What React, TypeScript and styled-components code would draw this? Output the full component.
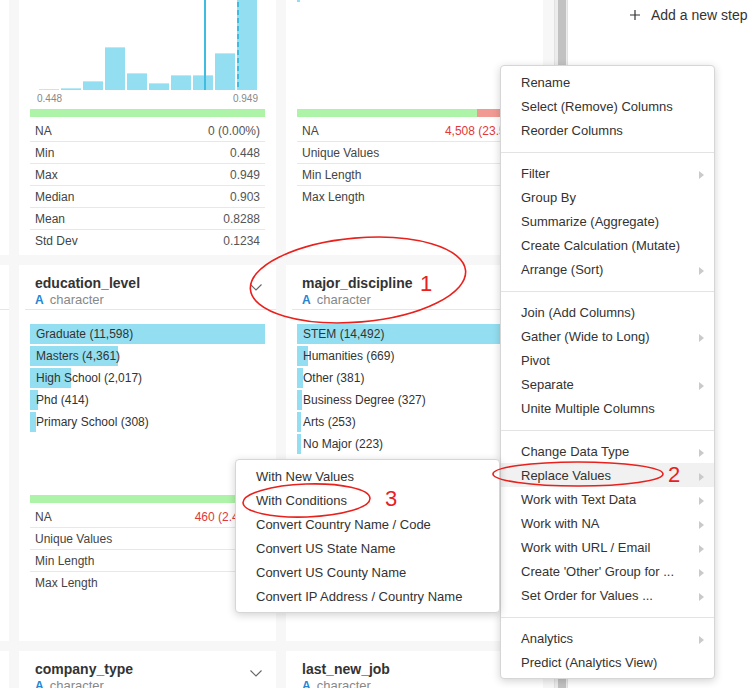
import React from 'react';
import styled, { createGlobalStyle } from 'styled-components';

const GlobalStyle = createGlobalStyle`
  html, body { margin: 0; padding: 0; }
  body {
    font-family: "Liberation Sans", Arial, Helvetica, sans-serif;
    color: #333;
    background: #f7f7f7;
  }
`;

const CYAN = '#93dff1';
const LINE = '#3ebde0';

const Page = styled.div`
  position: relative;
  width: 751px;
  height: 688px;
  overflow: hidden;
  display: flex;
  background: #f7f7f7;
`;

const Main = styled.div`
  width: 554px;
  flex: none;
  overflow: hidden;
  background: #f7f7f7;
`;

const Grid = styled.div`
  display: grid;
  grid-template-columns: repeat(3, 257px);
  grid-auto-rows: 376px;
  gap: 10px;
  margin-left: -248px;
  margin-top: -121px;
`;

const Splitter = styled.div`
  width: 14px;
  flex: none;
  box-sizing: border-box;
  background: #ececec;
  border-left: 1px solid #e2e2e2;
  border-right: 1px solid #e2e2e2;
  padding-left: 3px;
  display: flex;
`;

const SplitThumb = styled.div`
  width: 8px;
  background: #c2c2c2;
`;

const Side = styled.div`
  flex: 1;
  background: #fff;
  padding-top: 6px;
`;

const AddStep = styled.div`
  display: flex;
  align-items: center;
  gap: 11px;
  padding-left: 62px;
  font-size: 14px;
  line-height: 18px;
  color: #333;
`;

const Card = styled.div`
  background: #fff;
  display: flex;
  flex-direction: column;
  overflow: hidden;
`;

const Header = styled.div`
  height: 44px;
  box-sizing: border-box;
  padding: 10px 14px 0 16px;
  display: flex;
  justify-content: space-between;
  align-items: flex-start;
`;

const Title = styled.div`
  font-size: 14px;
  font-weight: bold;
  line-height: 17px;
  color: #333;
  white-space: nowrap;
`;

const TypeLine = styled.div`
  font-size: 13px;
  line-height: 16px;
  color: #888;
  display: flex;
  align-items: center;
  white-space: nowrap;
`;

const TypeIcon = styled.span`
  font-size: 12px;
  font-weight: bold;
  color: #2385d3;
  margin-right: 6px;
`;

const ChevronBox = styled.svg`
  margin-top: 9px;
  flex: none;
`;

const Divider = styled.div`
  height: 1px;
  margin-left: 6px;
  background: #e6e6e6;
`;

const Chart = styled.div`
  height: 185px;
  box-sizing: border-box;
  padding: 14px 11px 0;
`;

const BarRow = styled.div<{ $pct: number }>`
  height: 20px;
  margin-bottom: 2px;
  padding-left: 6px;
  font-size: 12px;
  line-height: 20px;
  color: #333;
  white-space: nowrap;
  background: linear-gradient(to right, ${CYAN} ${(p) => p.$pct}%, transparent ${(p) => p.$pct}%);
`;

const HistBars = styled.div`
  position: relative;
  height: 152px;
  margin: 0 8px 0 9px;
  display: flex;
  align-items: flex-end;
  gap: 2px;
`;

const HistBar = styled.div<{ $h: number }>`
  width: 20px;
  flex: none;
  height: ${(p) => p.$h}px;
  box-sizing: border-box;
  background: ${CYAN};
  border-top: 1px solid #b6ebf7;
`;

const MarkLine = styled.div<{ $x: number; $dashed?: boolean }>`
  position: absolute;
  top: 0;
  bottom: 0;
  left: ${(p) => p.$x}px;
  width: 2px;
  background: ${(p) =>
    p.$dashed
      ? `repeating-linear-gradient(to bottom, ${LINE} 0 5px, transparent 5px 8px)`
      : LINE};
`;

const HistLabels = styled.div`
  display: flex;
  justify-content: space-between;
  padding: 0 7px;
  font-size: 10px;
  line-height: 18px;
  color: #888;
`;

const Quality = styled.div<{ $good: number }>`
  height: 8px;
  margin: 0 11px;
  background: linear-gradient(to right, #aef4a8 ${(p) => p.$good}%, #f19a93 ${(p) => p.$good}%);
`;

const Stats = styled.div`
  margin: 3px 11px 0;
`;

const StatRow = styled.div`
  display: flex;
  justify-content: space-between;
  height: 19px;
  padding: 2px 5px 0;
  line-height: 19px;
  font-size: 12px;
  color: #444;
  white-space: nowrap;
  & + & {
    border-top: 1px solid #e8e8e8;
  }
`;

const StatValue = styled.span<{ $red?: boolean }>`
  color: ${(p) => (p.$red ? '#e0393a' : '#555')};
`;

const Menu = styled.div<{ $left: number; $top: number; $width: number }>`
  position: absolute;
  left: ${(p) => p.$left}px;
  top: ${(p) => p.$top}px;
  width: ${(p) => p.$width}px;
  box-sizing: border-box;
  padding: 4px 0;
  background: #fff;
  border: 1px solid #d6d6d6;
  border-radius: 4px;
  box-shadow: 0 2px 8px rgba(0, 0, 0, 0.18);
  font-size: 13px;
  color: #333;
`;

const MenuItem = styled.div<{ $active?: boolean }>`
  height: 24px;
  box-sizing: border-box;
  padding: 2px 10px 0 20px;
  line-height: 22px;
  display: flex;
  justify-content: space-between;
  align-items: center;
  white-space: nowrap;
  background: ${(p) => (p.$active ? '#f1f1f1' : 'transparent')};
`;

const Caret = styled.span`
  width: 0;
  height: 0;
  border-left: 5px solid #cacaca;
  border-top: 4px solid transparent;
  border-bottom: 4px solid transparent;
  margin-top: 1px;
`;

const MenuSep = styled.div`
  height: 1px;
  background: #e3e3e3;
  margin: 10px 0 8px;
`;

const Overlay = styled.svg`
  position: absolute;
  left: 0;
  top: 0;
  pointer-events: none;
`;

type Column = {
  name: string;
  kind: 'num' | 'cat';
  bars?: [string, number][];
  hist?: number[];
  labels?: [string, string];
  good: number;
  stats: [string, string, boolean?][];
};

const Chevron = () => (
  <ChevronBox width="12" height="7" viewBox="0 0 12 7">
    <polyline points="0.5,0.5 6,6 11.5,0.5" fill="none" stroke="#666" strokeWidth="1.1" />
  </ChevronBox>
);

const ColumnCard = ({ col }: { col: Column }) => {
  const max = col.bars ? Math.max(...col.bars.map((b) => b[1])) : 1;
  return (
    <Card>
      <Header>
        <div>
          <Title>{col.name}</Title>
          <TypeLine>
            <TypeIcon>{col.kind === 'cat' ? 'A' : '#'}</TypeIcon>
            {col.kind === 'cat' ? 'character' : 'numeric'}
          </TypeLine>
        </div>
        <Chevron />
      </Header>
      <Divider />
      <Chart>
        {col.kind === 'cat' &&
          col.bars!.map(([label, n]) => (
            <BarRow key={label} $pct={Math.max((n / max) * 100, 0.9)}>
              {label} ({n.toLocaleString('en-US')})
            </BarRow>
          ))}
        {col.kind === 'num' && (
          <>
            <HistBars>
              {col.hist!.map((h, i) => (
                <HistBar key={i} $h={h} />
              ))}
              <MarkLine $x={165} />
              <MarkLine $x={198} $dashed />
            </HistBars>
            <HistLabels>
              <span>{col.labels![0]}</span>
              <span>{col.labels![1]}</span>
            </HistLabels>
          </>
        )}
      </Chart>
      <Quality $good={col.good} />
      <Stats>
        {col.stats.map(([k, v, red]) => (
          <StatRow key={k}>
            <span>{k}</span>
            <StatValue $red={red}>{v}</StatValue>
          </StatRow>
        ))}
      </Stats>
    </Card>
  );
};

const charStats = (na: string, red: boolean, u: string, mn: string, mx: string): [string, string, boolean?][] => [
  ['NA', na, red],
  ['Unique Values', u],
  ['Min Length', mn],
  ['Max Length', mx],
];

const columns: Column[] = [
  {
    name: 'city',
    kind: 'cat',
    bars: [['city_103', 4355], ['city_21', 2702], ['city_16', 1533], ['city_114', 1336], ['city_160', 845], ['Other', 8387]],
    good: 100,
    stats: charStats('0 (0.00%)', false, '123', '6', '8'),
  },
  {
    name: 'city_development_index',
    kind: 'num',
    hist: [1, 2, 9, 43, 17, 7.5, 15, 15.5, 37, 152],
    labels: ['0.448', '0.949'],
    good: 100,
    stats: [
      ['NA', '0 (0.00%)'],
      ['Min', '0.448'],
      ['Max', '0.949'],
      ['Median', '0.903'],
      ['Mean', '0.8288'],
      ['Std Dev', '0.1234'],
    ],
  },
  {
    name: 'gender',
    kind: 'cat',
    bars: [['Male', 13221], ['Female', 1238], ['Other', 191]],
    good: 76.5,
    stats: charStats('4,508 (23.53%)', true, '3', '4', '6'),
  },
  {
    name: 'enrolled_university',
    kind: 'cat',
    bars: [['no_enrollment', 13817], ['Full time course', 3757], ['Part time course', 1198]],
    good: 98,
    stats: charStats('386 (2.01%)', true, '3', '16', '16'),
  },
  {
    name: 'education_level',
    kind: 'cat',
    bars: [['Graduate', 11598], ['Masters', 4361], ['High School', 2017], ['Phd', 414], ['Primary School', 308]],
    good: 97.6,
    stats: charStats('460 (2.40%)', true, '5', '3', '14'),
  },
  {
    name: 'major_discipline',
    kind: 'cat',
    bars: [['STEM', 14492], ['Humanities', 669], ['Other', 381], ['Business Degree', 327], ['Arts', 253], ['No Major', 223]],
    good: 85.3,
    stats: charStats('2,813 (14.68%)', true, '6', '4', '15'),
  },
  {
    name: 'company_size',
    kind: 'cat',
    bars: [['50-99', 3083], ['100-500', 2571], ['10000+', 2019]],
    good: 69,
    stats: charStats('5,938 (30.99%)', true, '8', '3', '9'),
  },
  {
    name: 'company_type',
    kind: 'cat',
    bars: [['Pvt Ltd', 9817], ['Funded Startup', 1001], ['Public Sector', 955]],
    good: 68,
    stats: charStats('6,140 (32.05%)', true, '6', '3', '19'),
  },
  {
    name: 'last_new_job',
    kind: 'cat',
    bars: [['1', 8040], ['>4', 3290], ['2', 2900], ['never', 2452]],
    good: 97.8,
    stats: charStats('423 (2.21%)', true, '6', '1', '5'),
  },
];

const mainMenu: (string | null | [string, boolean])[] = [
  'Rename',
  'Select (Remove) Columns',
  'Reorder Columns',
  null,
  ['Filter', true],
  'Group By',
  'Summarize (Aggregate)',
  'Create Calculation (Mutate)',
  ['Arrange (Sort)', true],
  null,
  'Join (Add Columns)',
  ['Gather (Wide to Long)', true],
  'Pivot',
  ['Separate', true],
  'Unite Multiple Columns',
  null,
  ['Change Data Type', true],
  ['Replace Values', true],
  ['Work with Text Data', true],
  ['Work with NA', true],
  ['Work with URL / Email', true],
  ["Create 'Other' Group for ...", true],
  ['Set Order for Values ...', true],
  null,
  ['Analytics', true],
  'Predict (Analytics View)',
];

const subMenu = [
  'With New Values',
  'With Conditions',
  'Convert Country Name / Code',
  'Convert US State Name',
  'Convert US County Name',
  'Convert IP Address / Country Name',
];

export default function App() {
  return (
    <>
      <GlobalStyle />
      <Page>
        <Main>
          <Grid>
            {columns.map((c) => (
              <ColumnCard key={c.name} col={c} />
            ))}
          </Grid>
        </Main>
        <Splitter>
          <SplitThumb />
        </Splitter>
        <Side>
          <AddStep>
            <svg width="10" height="10" viewBox="0 0 10 10">
              <path d="M5 0v10M0 5h10" stroke="#333" strokeWidth="1.2" />
            </svg>
            Add a new step
          </AddStep>
        </Side>

        <Menu $left={500} $top={65} $width={215}>
          {mainMenu.map((m, i) => {
            if (m === null) return <MenuSep key={i} />;
            const [label, sub] = typeof m === 'string' ? [m, false] : m;
            return (
              <MenuItem key={i} $active={label === 'Replace Values'}>
                <span>{label}</span>
                {sub && <Caret />}
              </MenuItem>
            );
          })}
        </Menu>

        <Menu $left={235} $top={459} $width={265}>
          {subMenu.map((s) => (
            <MenuItem key={s}>
              <span>{s}</span>
            </MenuItem>
          ))}
        </Menu>

        <Overlay width="751" height="688" viewBox="0 0 751 688">
          <g fill="none" stroke="#e8211d" strokeWidth="1.6">
            <ellipse cx="358" cy="280" rx="108" ry="42" transform="rotate(-5 358 280)" />
            <ellipse cx="578" cy="474" rx="85" ry="12" />
            <ellipse cx="306.5" cy="500.5" rx="63.5" ry="16.5" transform="rotate(-2 306.5 500.5)" />
          </g>
          <g fill="#e8211d" fontFamily="Liberation Sans, Arial, sans-serif" fontSize="22">
            <text x="420" y="291">1</text>
            <text x="668" y="482">2</text>
            <text x="385" y="506">3</text>
          </g>
        </Overlay>
      </Page>
    </>
  );
}
